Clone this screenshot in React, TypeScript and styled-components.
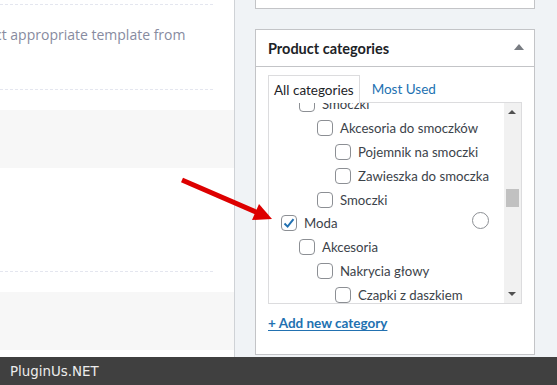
import React from "react";
import styled, { createGlobalStyle } from "styled-components";

const GlobalStyle = createGlobalStyle`
  html, body {
    margin: 0;
    padding: 0;
    background: #ffffff;
  }
  * {
    box-sizing: border-box;
  }
`;

const Page = styled.div`
  position: relative;
  width: 557px;
  height: 385px;
  overflow: hidden;
  display: flex;
  flex-direction: column;
`;

const Main = styled.div`
  display: flex;
  height: 357px;
  background: #f0f3f6;
`;

/* left editor area */
const Editor = styled.div`
  width: 235px;
  flex-shrink: 0;
  background: #ffffff;
  border-right: 1px solid #cfd2d6;
  display: flex;
  flex-direction: column;
  overflow: hidden;
`;

const Section = styled.div<{ $h: number; $dashed?: boolean }>`
  height: ${(p) => p.$h}px;
  flex-shrink: 0;
  margin-right: 21px;
  border-bottom: ${(p) => (p.$dashed ? "1px dashed #e4e6ef" : "none")};
  display: flex;
  align-items: flex-start;
`;

const Band = styled.div<{ $h: number }>`
  height: ${(p) => p.$h}px;
  flex-shrink: 0;
  background: #f7f7f7;
`;

const Spacer = styled.div<{ $h: number }>`
  height: ${(p) => p.$h}px;
  flex-shrink: 0;
`;

const Hint = styled.div`
  font-family: "Open Sans", sans-serif;
  font-size: 14px;
  color: #878ba0;
  white-space: nowrap;
  margin-left: -5px;
  padding-top: 20px;
`;

/* right sidebar */
const Sidebar = styled.div`
  width: 280px;
  margin-left: 20px;
  display: flex;
  flex-direction: column;
`;

const StubBox = styled.div`
  height: 9px;
  background: #ffffff;
  border: 1px solid #c3c4c7;
  border-top: none;
`;

const Postbox = styled.div`
  position: relative;
  margin-top: 20px;
  background: #ffffff;
  border: 1px solid #c3c4c7;
  height: 326px;
  display: flex;
  flex-direction: column;
  font-family: "Lato", "Noto Sans", sans-serif;
`;

const PostboxHeader = styled.div`
  height: 37px;
  border-bottom: 1px solid #c3c4c7;
  display: flex;
  align-items: center;
  justify-content: space-between;
  padding: 0 10px 0 12px;
  font-size: 14.5px;
  font-weight: 700;
  color: #1d2327;
`;

const Toggle = styled.span`
  width: 0;
  height: 0;
  border-left: 5px solid transparent;
  border-right: 5px solid transparent;
  border-bottom: 6px solid #787c82;
  margin-bottom: 3px;
`;

const Inside = styled.div`
  padding: 8px 12px 0 12px;
  display: flex;
  flex-direction: column;
`;

const Tabs = styled.div`
  display: flex;
  align-items: flex-end;
  height: 27px;
`;

const Tab = styled.div<{ $active?: boolean }>`
  height: ${(p) => (p.$active ? "28px" : "27px")};
  margin-bottom: ${(p) => (p.$active ? "-1px" : "0")};
  padding: 0 5px 0 5px;
  display: flex;
  align-items: center;
  font-size: 13.5px;
  color: ${(p) => (p.$active ? "#1d2327" : "#2271b1")};
  background: ${(p) => (p.$active ? "#ffffff" : "transparent")};
  border: ${(p) => (p.$active ? "1px solid #dcdcde" : "1px solid transparent")};
  border-bottom: none;
  position: relative;
  z-index: 1;
  margin-right: 6px;
`;

const ListBox = styled.div`
  position: relative;
  height: 202px;
  border: 1px solid #dcdcde;
  overflow: hidden;
`;

const ListScroll = styled.div`
  margin-top: -10.5px;
  padding-left: 12px;
`;

const Row = styled.div<{ $level: number }>`
  height: 23.8px;
  display: flex;
  align-items: center;
  padding-left: ${(p) => p.$level * 18}px;
  font-size: 13.2px;
  color: #3c434a;
  white-space: nowrap;
`;

const Check = styled.span`
  width: 16px;
  height: 16px;
  border: 1px solid #8c8f94;
  border-radius: 4px;
  margin-right: 7px;
  flex-shrink: 0;
  display: flex;
  align-items: center;
  justify-content: center;
  background: #ffffff;
`;

const ScrollTrack = styled.div`
  position: absolute;
  top: 0;
  right: 0;
  bottom: 0;
  width: 17px;
  background: #f1f1f1;
`;

const ScrollArrow = styled.span<{ $down?: boolean }>`
  position: absolute;
  left: 4px;
  ${(p) => (p.$down ? "bottom: 7px;" : "top: 7px;")}
  width: 0;
  height: 0;
  border-left: 4px solid transparent;
  border-right: 4px solid transparent;
  ${(p) =>
    p.$down ? "border-top: 4px solid #505050;" : "border-bottom: 4px solid #505050;"}
`;

const ScrollThumb = styled.div`
  position: absolute;
  left: 2px;
  top: 86px;
  width: 13px;
  height: 18px;
  background: #c1c1c1;
`;

const Radio = styled.span`
  position: absolute;
  left: 216px;
  top: 182px;
  width: 17px;
  height: 17px;
  border: 1px solid #8c8f94;
  border-radius: 50%;
  background: #ffffff;
`;

const AddLink = styled.a`
  margin-top: 11px;
  font-size: 13.5px;
  font-weight: 700;
  color: #2271b1;
  text-decoration: underline;
  text-underline-offset: 2px;
`;

const Footer = styled.div`
  height: 28px;
  background: #404040;
  display: flex;
  align-items: center;
  padding-left: 10px;
  font-family: "DejaVu Sans", sans-serif;
  font-size: 13.4px;
  color: #ececec;
`;

const Pointer = styled.svg`
  position: absolute;
  left: 0;
  top: 0;
  pointer-events: none;
`;

interface Category {
  name: string;
  level: number;
  checked?: boolean;
}

const categories: Category[] = [
  { name: "Smoczki", level: 1 },
  { name: "Akcesoria do smoczków", level: 2 },
  { name: "Pojemnik na smoczki", level: 3 },
  { name: "Zawieszka do smoczka", level: 3 },
  { name: "Smoczki", level: 2 },
  { name: "Moda", level: 0, checked: true },
  { name: "Akcesoria", level: 1 },
  { name: "Nakrycia głowy", level: 2 },
  { name: "Czapki z daszkiem", level: 3 },
];

const Tick = () => (
  <svg width="14" height="14" viewBox="0 0 14 14">
    <path d="M2.5 7.5 L5.6 10.6 L11.5 3.2" fill="none" stroke="#2271b1" strokeWidth="2" />
  </svg>
);

const App: React.FC = () => {
  return (
    <>
      <GlobalStyle />
      <Page>
        <Main>
          <Editor>
            <Section $h={5} $dashed />
            <Section $h={85} $dashed>
              <Hint>ct appropriate template from</Hint>
            </Section>
            <Spacer $h={20} />
            <Band $h={58} />
            <Section $h={104} $dashed />
            <Spacer $h={20} />
            <Band $h={58} />
          </Editor>
          <Sidebar>
            <StubBox />
            <Postbox>
              <PostboxHeader>
                Product categories
                <Toggle />
              </PostboxHeader>
              <Inside>
                <Tabs>
                  <Tab $active>All categories</Tab>
                  <Tab>Most Used</Tab>
                </Tabs>
                <ListBox>
                  <ListScroll>
                    {categories.map((c, i) => (
                      <Row key={i} $level={c.level}>
                        <Check>{c.checked && <Tick />}</Check>
                        {c.name}
                      </Row>
                    ))}
                  </ListScroll>
                  <ScrollTrack>
                    <ScrollArrow />
                    <ScrollThumb />
                    <ScrollArrow $down />
                  </ScrollTrack>
                </ListBox>
                <AddLink href="#">+ Add new category</AddLink>
              </Inside>
              <Radio />
            </Postbox>
          </Sidebar>
        </Main>
        <Footer>PluginUs.NET</Footer>
        <Pointer width="557" height="385">
          <line x1="182" y1="180" x2="257" y2="212.5" stroke="#dd0000" strokeWidth="5" />
          <polygon points="272,219 252,220 259,204" fill="#dd0000" />
        </Pointer>
      </Page>
    </>
  );
};

export default App;
